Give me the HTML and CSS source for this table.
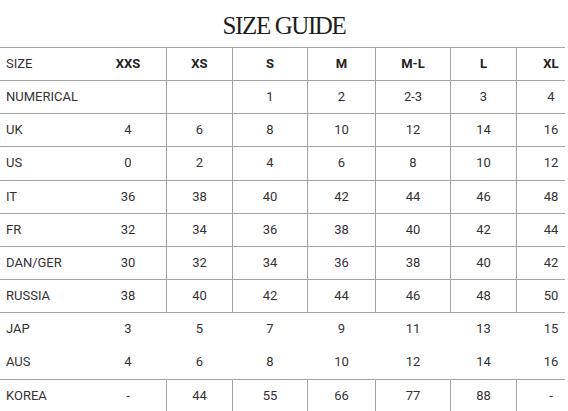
FILE: index.html
```html
<!DOCTYPE html>
<html lang="en">
<head>
<meta charset="utf-8">
<title>Size Guide</title>
<link rel="stylesheet" href="styles.css">
</head>
<body>
<h1 class="title">SIZE GUIDE</h1>
<div class="table-wrap">
<table class="size-table">
<colgroup>
<col class="c-label"><col class="c-xxs"><col class="c-xs"><col class="c-s"><col class="c-m"><col class="c-ml"><col class="c-l"><col class="c-xl">
</colgroup>
<thead>
<tr><th class="label">SIZE</th><th class="first">XXS</th><th>XS</th><th>S</th><th>M</th><th>M-L</th><th>L</th><th>XL</th></tr>
</thead>
<tbody>
<tr><td class="label">NUMERICAL</td><td class="first"></td><td></td><td>1</td><td>2</td><td>2-3</td><td>3</td><td>4</td></tr>
<tr><td class="label">UK</td><td class="first">4</td><td>6</td><td>8</td><td>10</td><td>12</td><td>14</td><td>16</td></tr>
<tr><td class="label">US</td><td class="first">0</td><td>2</td><td>4</td><td>6</td><td>8</td><td>10</td><td>12</td></tr>
<tr><td class="label">IT</td><td class="first">36</td><td>38</td><td>40</td><td>42</td><td>44</td><td>46</td><td>48</td></tr>
<tr><td class="label">FR</td><td class="first">32</td><td>34</td><td>36</td><td>38</td><td>40</td><td>42</td><td>44</td></tr>
<tr><td class="label">DAN/GER</td><td class="first">30</td><td>32</td><td>34</td><td>36</td><td>38</td><td>40</td><td>42</td></tr>
<tr><td class="label">RUSSIA</td><td class="first">38</td><td>40</td><td>42</td><td>44</td><td>46</td><td>48</td><td>50</td></tr>
<tr class="plain joined"><td class="label">JAP</td><td class="first">3</td><td>5</td><td>7</td><td>9</td><td>11</td><td>13</td><td>15</td></tr>
<tr class="plain"><td class="label">AUS</td><td class="first">4</td><td>6</td><td>8</td><td>10</td><td>12</td><td>14</td><td>16</td></tr>
<tr><td class="label">KOREA</td><td class="first">-</td><td>44</td><td>55</td><td>66</td><td>77</td><td>88</td><td>-</td></tr>
</tbody>
</table>
</div>
</body>
</html>
```
FILE: styles.css
```css
html, body {
  margin: 0;
  padding: 0;
  background: #ffffff;
}

.title {
  margin: 0;
  padding: 11px 0 6px;
  height: 30px;
  line-height: 30px;
  text-align: center;
  font-family: "Liberation Serif", "DejaVu Serif", serif;
  font-weight: normal;
  font-size: 25px;
  letter-spacing: -1.4px;
  color: #1e1e1e;
}

.table-wrap {
  width: 565px;
  overflow: hidden;
}

.size-table {
  width: 585px;
  table-layout: fixed;
  border-collapse: separate;
  border-spacing: 0;
  border-top: 1px solid #a3a3a3;
  font-family: Roboto, "Liberation Sans", sans-serif;
  font-size: 13px;
  color: #333333;
}

.c-label { width: 90px; }
.c-xxs { width: 76px; }
.c-xs { width: 66px; }
.c-s { width: 75px; }
.c-m { width: 68px; }
.c-ml { width: 75px; }
.c-l { width: 66px; }
.c-xl { width: 69px; }

.size-table th,
.size-table td {
  padding: 0;
  height: 32.15px;
  line-height: 32.15px;
  text-align: center;
  white-space: nowrap;
  border-bottom: 1px solid #a3a3a3;
  border-left: 1px solid #a3a3a3;
}

.size-table th {
  font-weight: bold;
  color: #222222;
}

.size-table .label {
  text-align: left;
  padding-left: 6px;
  border-left: none;
  font-weight: normal;
  color: #333333;
}

.size-table .first {
  border-left: none;
}

.size-table .plain td {
  border-left-color: transparent;
}

.size-table .joined td {
  border-bottom-color: transparent;
}
```
